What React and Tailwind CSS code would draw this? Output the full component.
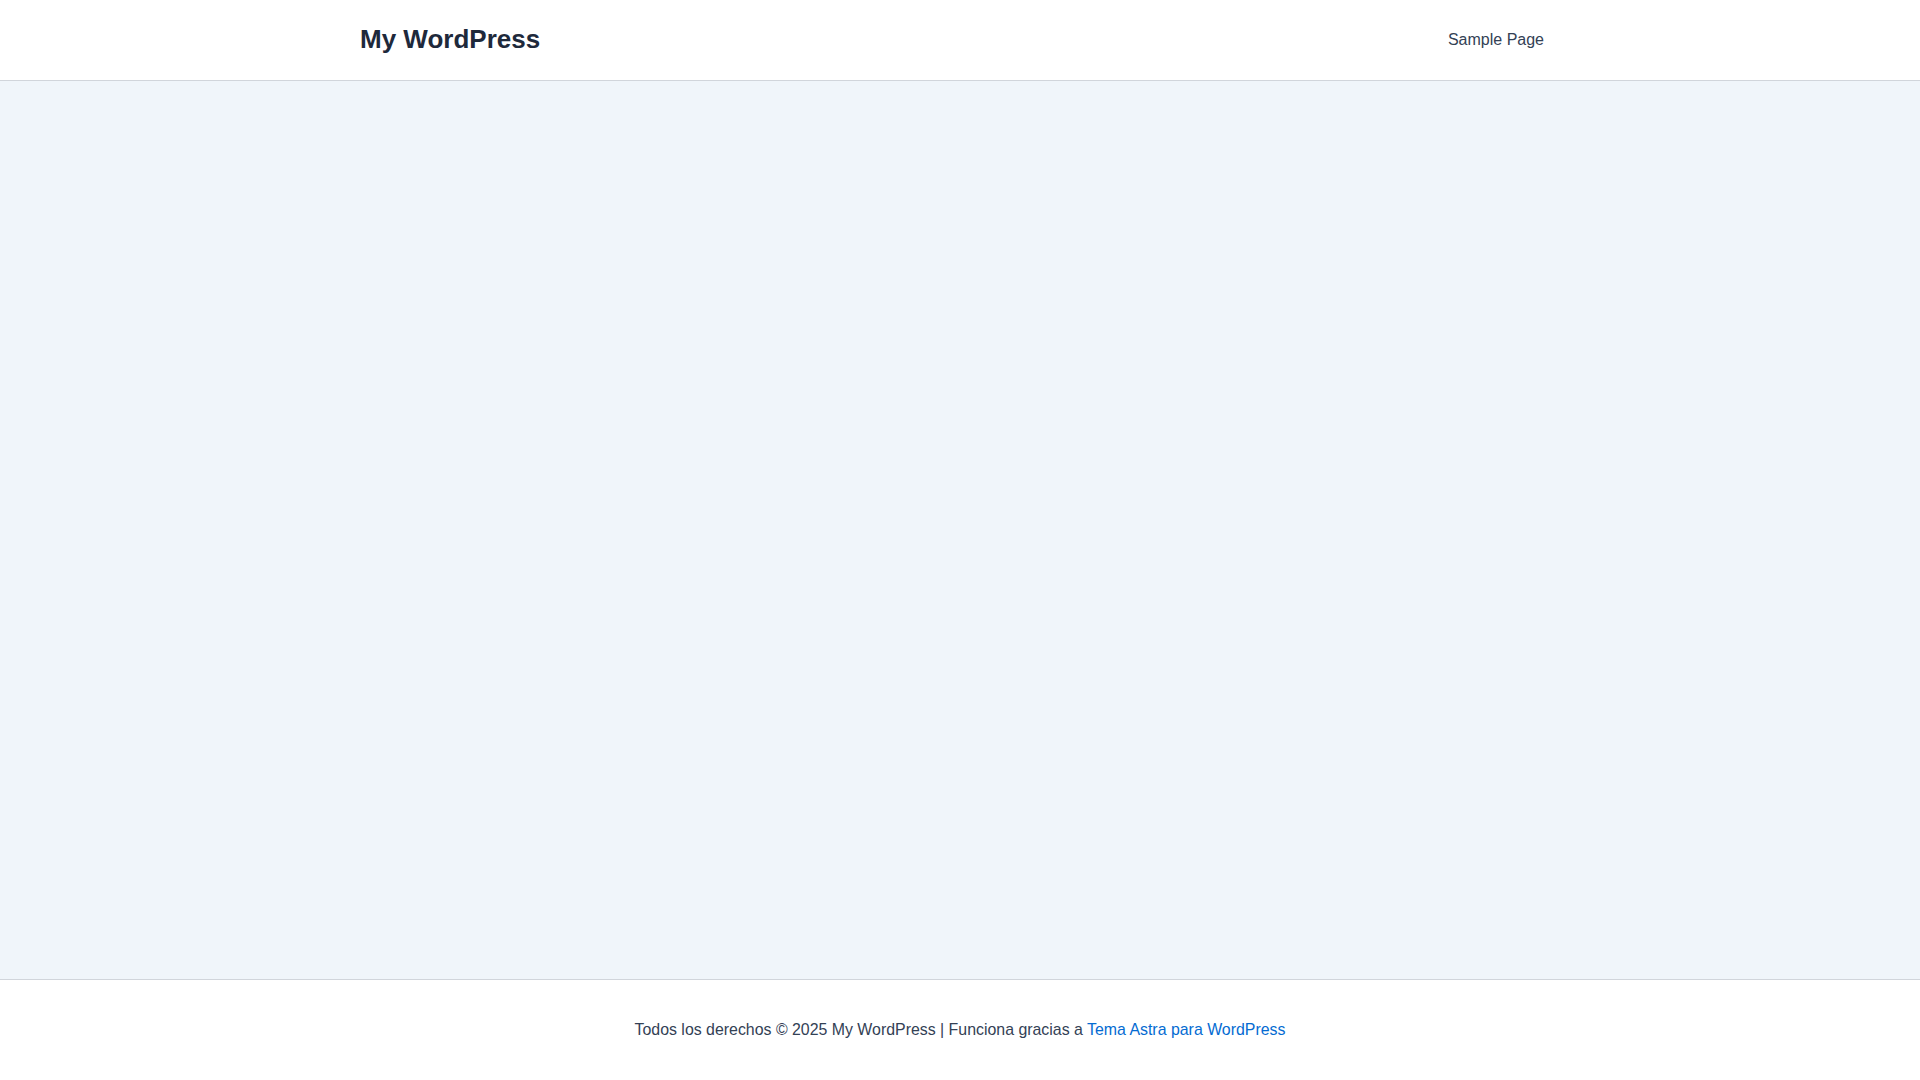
import React from 'react';

const App = () => {
    return (
        <div className="h-screen flex flex-col bg-white" style={{ fontFamily: '"Liberation Sans", Arial, sans-serif' }}>
            <header className="h-[81px] shrink-0 border-b border-[#d1d5db] bg-white">
                <div className="max-w-[1240px] h-full mx-auto px-5 flex items-center justify-between">
                    <a className="text-[26px] font-bold text-[#1e293b] leading-none pb-[2px]">My WordPress</a>
                    <nav>
                        <a className="block px-4 text-[16px] text-[#334155] leading-none">Sample Page</a>
                    </nav>
                </div>
            </header>

            <main className="flex-1 bg-[#f0f5fa]" />

            <footer className="h-[101px] shrink-0 border-t border-[#d1d5db] bg-white flex items-center justify-center">
                <p className="text-[15.9px] text-[#334155] leading-none">
                    Todos los derechos © 2025 My WordPress | Funciona gracias a <a className="text-[#046bd2]">Tema Astra para WordPress</a>
                </p>
            </footer>
        </div>
    );
};

export default App;
